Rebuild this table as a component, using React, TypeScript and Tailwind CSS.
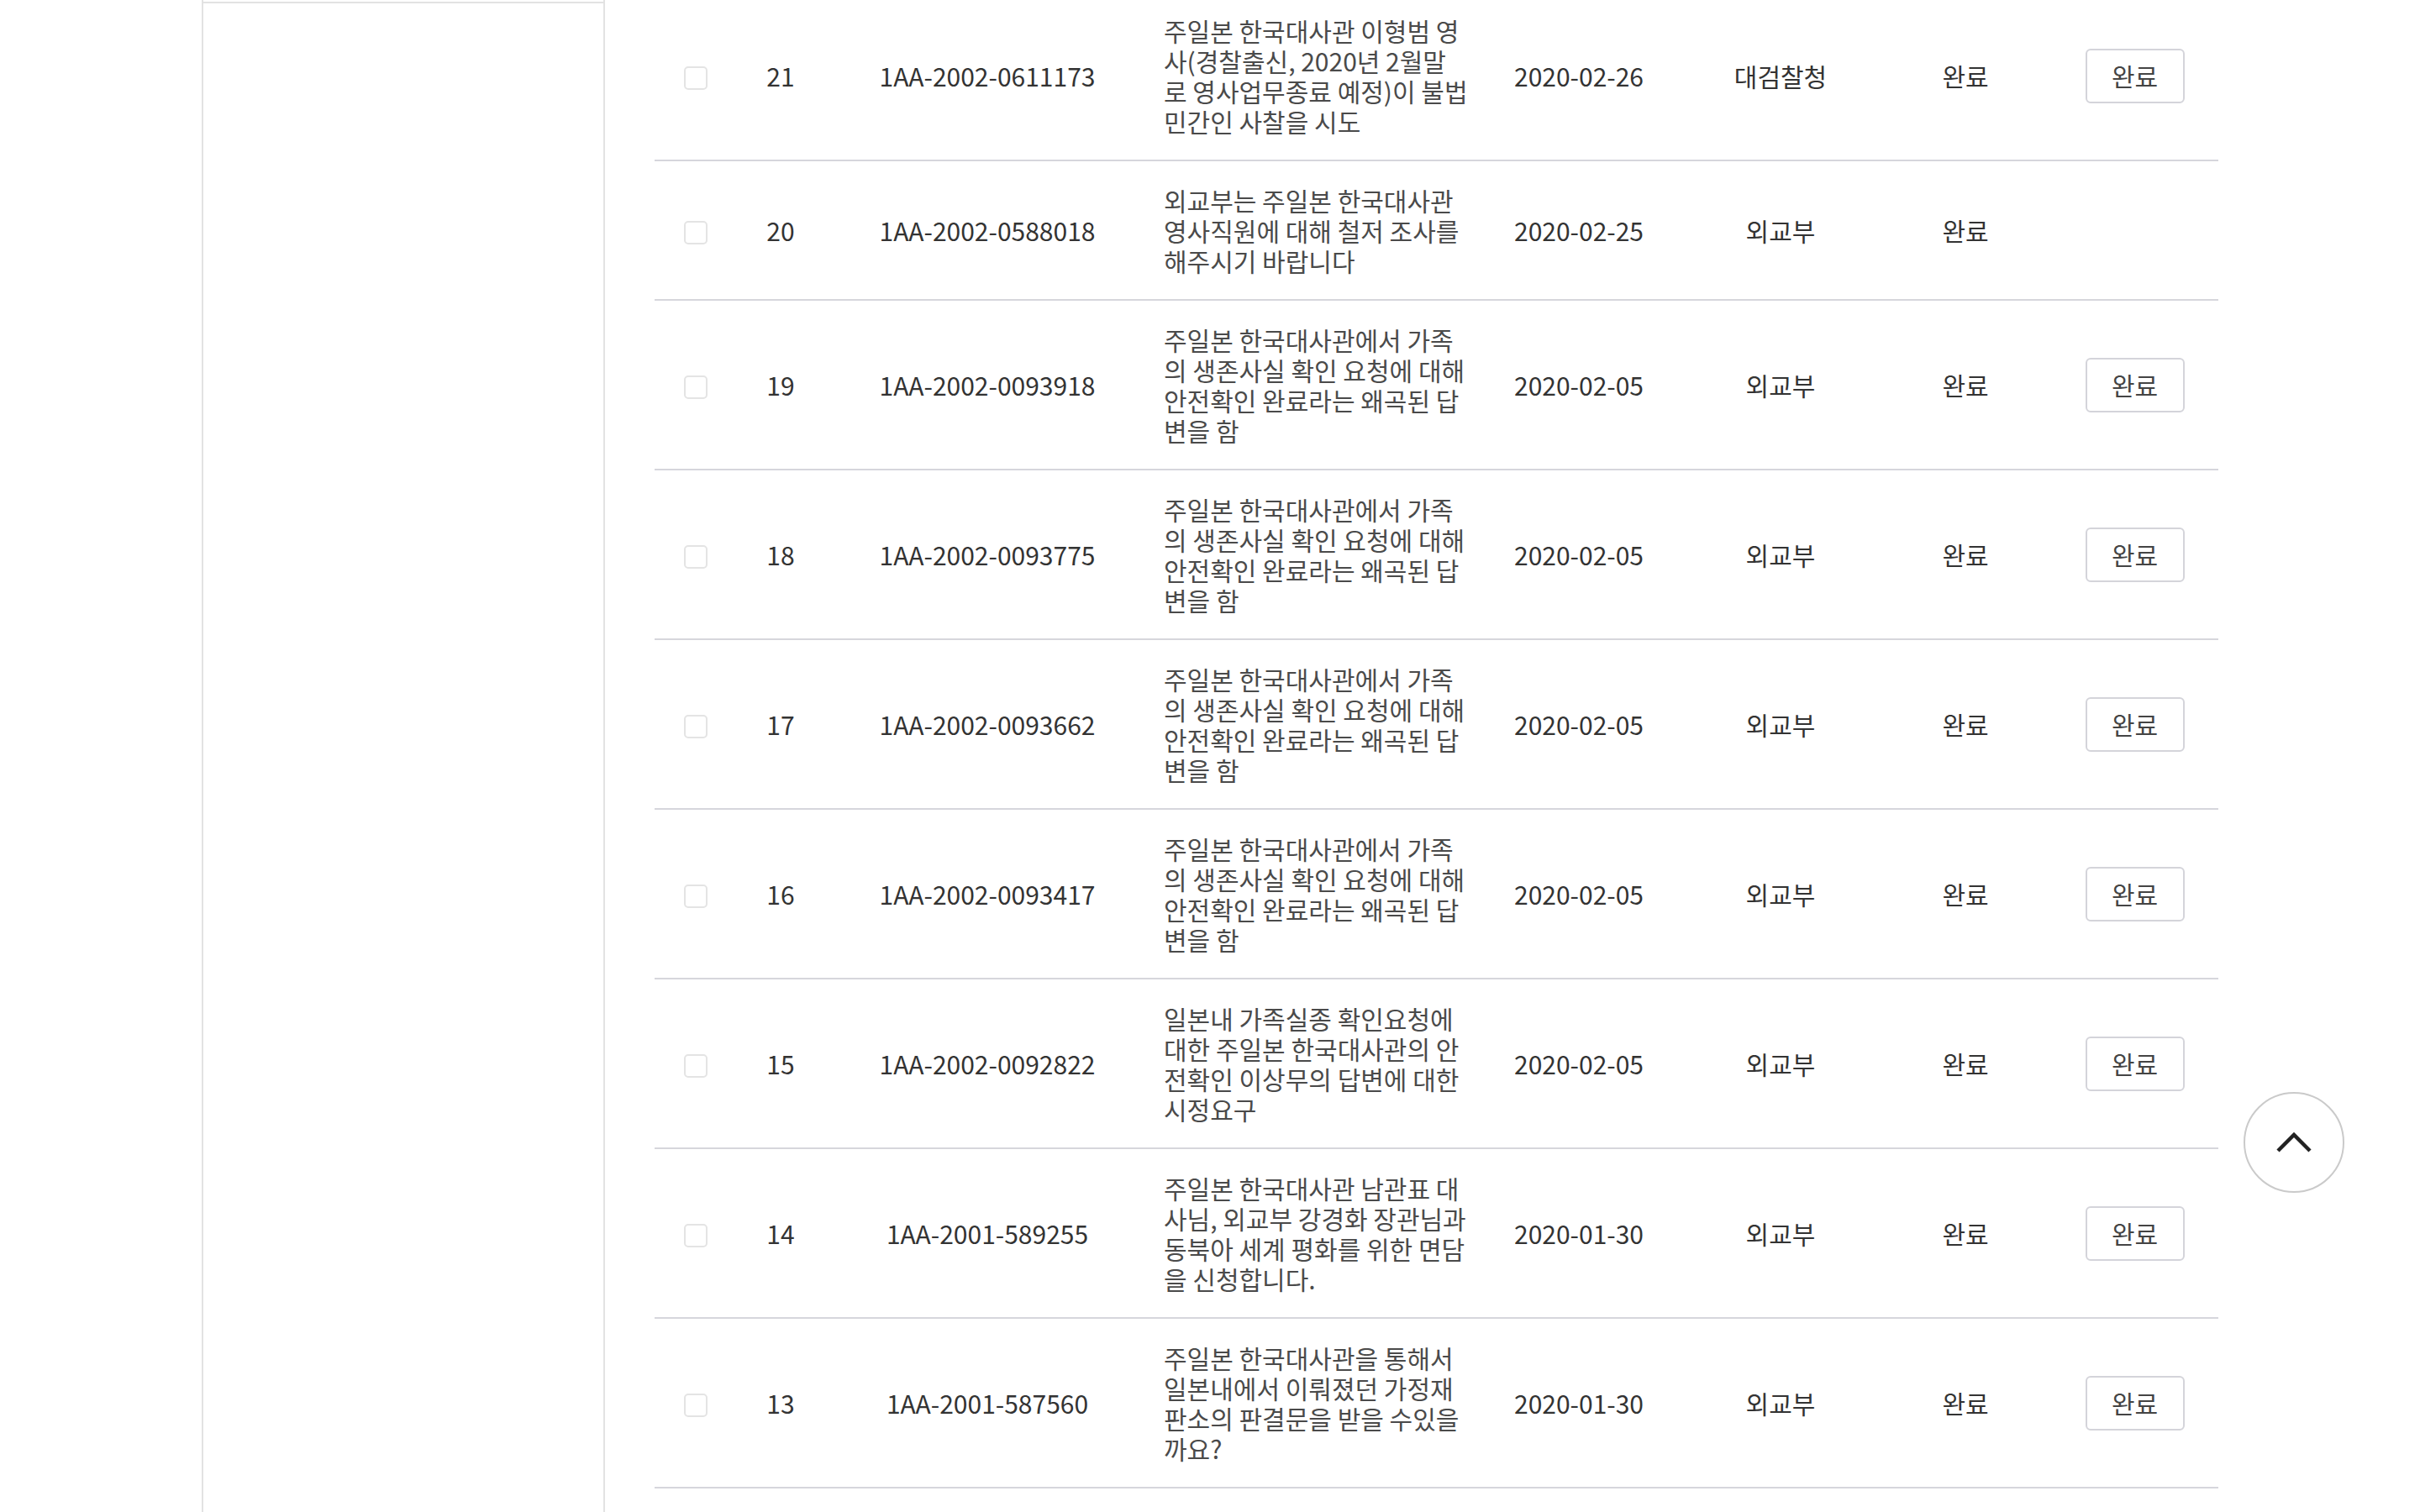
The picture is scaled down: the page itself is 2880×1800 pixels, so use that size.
import React from 'react';

type Petition = {
  no: number;
  regNo: string;
  title: string[];
  date: string;
  agency: string;
  status: string;
  hasButton: boolean;
};

const embassyAnswer = [
  '주일본 한국대사관에서 가족',
  '의 생존사실 확인 요청에 대해',
  '안전확인 완료라는 왜곡된 답',
  '변을 함',
];

const petitions: Petition[] = [
  {
    no: 21,
    regNo: '1AA-2002-0611173',
    title: ['주일본 한국대사관 이형범 영', '사(경찰출신, 2020년 2월말', '로 영사업무종료 예정)이 불법', '민간인 사찰을 시도'],
    date: '2020-02-26',
    agency: '대검찰청',
    status: '완료',
    hasButton: true,
  },
  {
    no: 20,
    regNo: '1AA-2002-0588018',
    title: ['외교부는 주일본 한국대사관', '영사직원에 대해 철저 조사를', '해주시기 바랍니다'],
    date: '2020-02-25',
    agency: '외교부',
    status: '완료',
    hasButton: false,
  },
  { no: 19, regNo: '1AA-2002-0093918', title: embassyAnswer, date: '2020-02-05', agency: '외교부', status: '완료', hasButton: true },
  { no: 18, regNo: '1AA-2002-0093775', title: embassyAnswer, date: '2020-02-05', agency: '외교부', status: '완료', hasButton: true },
  { no: 17, regNo: '1AA-2002-0093662', title: embassyAnswer, date: '2020-02-05', agency: '외교부', status: '완료', hasButton: true },
  { no: 16, regNo: '1AA-2002-0093417', title: embassyAnswer, date: '2020-02-05', agency: '외교부', status: '완료', hasButton: true },
  {
    no: 15,
    regNo: '1AA-2002-0092822',
    title: ['일본내 가족실종 확인요청에', '대한 주일본 한국대사관의 안', '전확인 이상무의 답변에 대한', '시정요구'],
    date: '2020-02-05',
    agency: '외교부',
    status: '완료',
    hasButton: true,
  },
  {
    no: 14,
    regNo: '1AA-2001-589255',
    title: ['주일본 한국대사관 남관표 대', '사님, 외교부 강경화 장관님과', '동북아 세계 평화를 위한 면담', '을 신청합니다.'],
    date: '2020-01-30',
    agency: '외교부',
    status: '완료',
    hasButton: true,
  },
  {
    no: 13,
    regNo: '1AA-2001-587560',
    title: ['주일본 한국대사관을 통해서', '일본내에서 이뤄졌던 가정재', '판소의 판결문을 받을 수있을', '까요?'],
    date: '2020-01-30',
    agency: '외교부',
    status: '완료',
    hasButton: true,
  },
];

function PetitionRow({ item }: { item: Petition }) {
  return (
    <div className="grid grid-cols-[98px_104px_388px_406px_208px_272px_168px_217px] items-center border-b-2 border-[#d6d6dc] py-[28px] text-[30px] leading-[36px] text-[#333]">
      <div className="flex justify-center pt-[5px]">
        <span className="block h-[28px] w-[28px] rounded-[5px] border-2 border-[#e4e4e4] bg-white" />
      </div>
      <div className="text-center">{item.no}</div>
      <div className="text-center">{item.regNo}</div>
      <div className="pl-[16px] text-[#4a4a4a] whitespace-nowrap">
        {item.title.map((line, i) => (
          <div key={i}>{line}</div>
        ))}
      </div>
      <div className="text-center">{item.date}</div>
      <div className="text-center">{item.agency}</div>
      <div className="text-center">{item.status}</div>
      <div className="flex justify-center pl-[18px]">
        {item.hasButton && (
          <button className="flex h-[65px] w-[118px] items-center justify-center rounded-[6px] border-2 border-[#d4d4da] bg-white text-[30px] text-[#444]">
            완료
          </button>
        )}
      </div>
    </div>
  );
}

export default function App() {
  return (
    <div className="relative flex h-[1800px] w-[2880px] overflow-hidden bg-white font-['Noto_Sans_CJK_KR','Noto_Sans',sans-serif]">
      {/* Left menu column */}
      <div className="ml-[240px] w-[480px] border-x-2 border-[#e2e2e2]">
        <div className="h-[4px] border-b-2 border-[#e2e2e2]" />
      </div>

      {/* Petition list */}
      <div className="ml-[59px] mt-[-10px] w-[1861px]">
        {petitions.map(item => (
          <PetitionRow key={item.no} item={item} />
        ))}
      </div>

      {/* Scroll to top */}
      <button className="fixed left-[2670px] top-[1300px] flex h-[120px] w-[120px] items-center justify-center rounded-full border-2 border-[#cacaca] bg-white">
        <svg width="44" height="26" viewBox="0 0 44 26" fill="none">
          <polyline points="3,23 22,4 41,23" stroke="#222" strokeWidth="4.5" />
        </svg>
      </button>
    </div>
  );
}
